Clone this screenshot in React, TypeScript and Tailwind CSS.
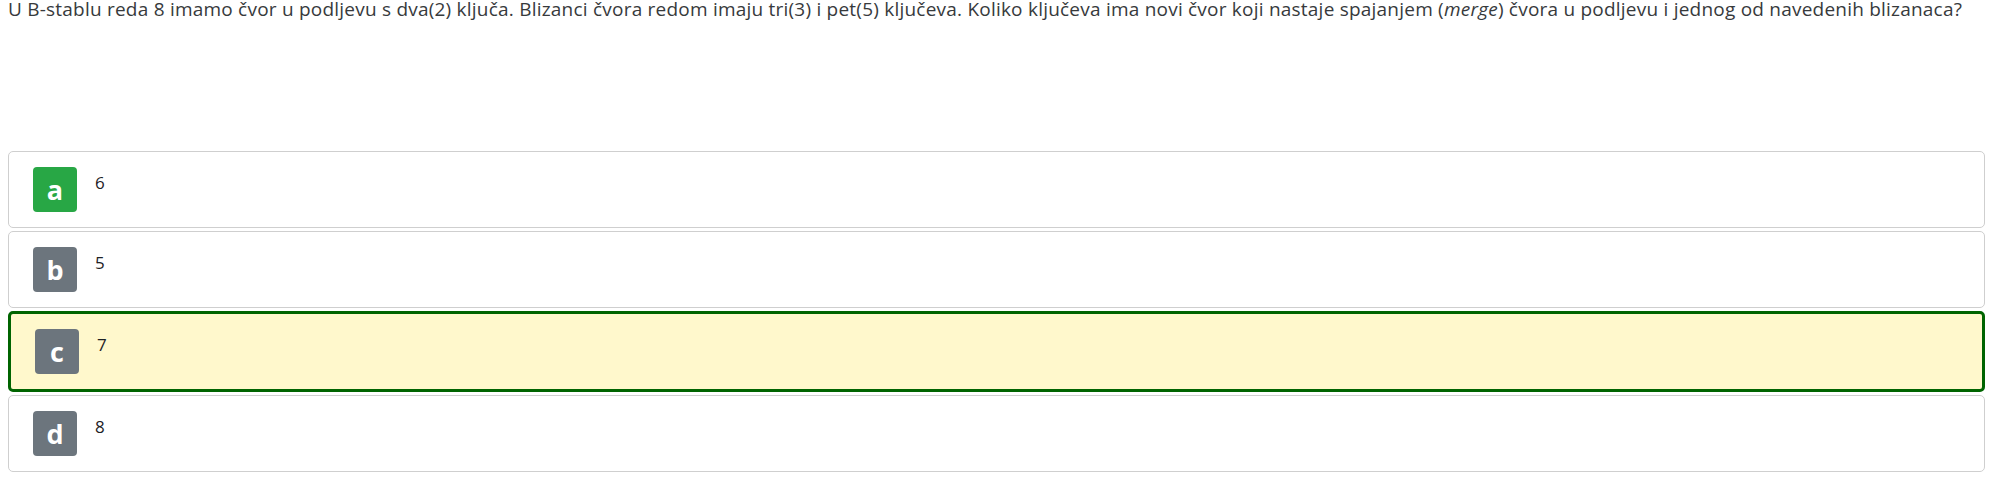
import React from "react";

type Opt = { letter: string; text: string; badge: string; selected?: boolean };

const options: Opt[] = [
  { letter: "a", text: "6", badge: "bg-[#28a745]" },
  { letter: "b", text: "5", badge: "bg-[#6c757d]" },
  { letter: "c", text: "7", badge: "bg-[#6c757d]", selected: true },
  { letter: "d", text: "8", badge: "bg-[#6c757d]" },
];

export default function App() {
  return (
    <div
      className="bg-white w-[2000px] h-[484px] text-[#373a3c] pl-2 pr-[15px]"
      style={{ fontFamily: "'Open Sans', 'Noto Sans', sans-serif" }}
    >
      <p className="text-[19px] leading-[19px] tracking-[0.22px] whitespace-nowrap">
        U B-stablu reda 8 imamo čvor u podljevu s dva(2) ključa. Blizanci čvora redom imaju tri(3) i pet(5) ključeva. Koliko ključeva ima novi čvor koji nastaje spajanjem (<em>merge</em>) čvora u podljevu i jednog od navedenih blizanaca?
      </p>
      <div className="mt-[132px] flex flex-col gap-[3px]">
        {options.map((o) => (
          <div
            key={o.letter}
            className={
              o.selected
                ? "flex items-start rounded-[5px] border-[3px] border-[#006400] bg-[#fff8cc] py-[15px] pl-[24px]"
                : "flex items-start rounded-[5px] border border-[#cfcfcf] bg-white py-[15px] pl-[24px]"
            }
          >
            <span
              className={`${o.badge} flex h-[45px] w-[44px] items-center justify-center rounded-[4px] text-[27px] font-bold leading-none text-white`}
            >
              {o.letter}
            </span>
            <span className="ml-[18px] pt-[3px] text-[17px] leading-[25.5px] text-[#1d2125]">{o.text}</span>
          </div>
        ))}
      </div>
    </div>
  );
}
